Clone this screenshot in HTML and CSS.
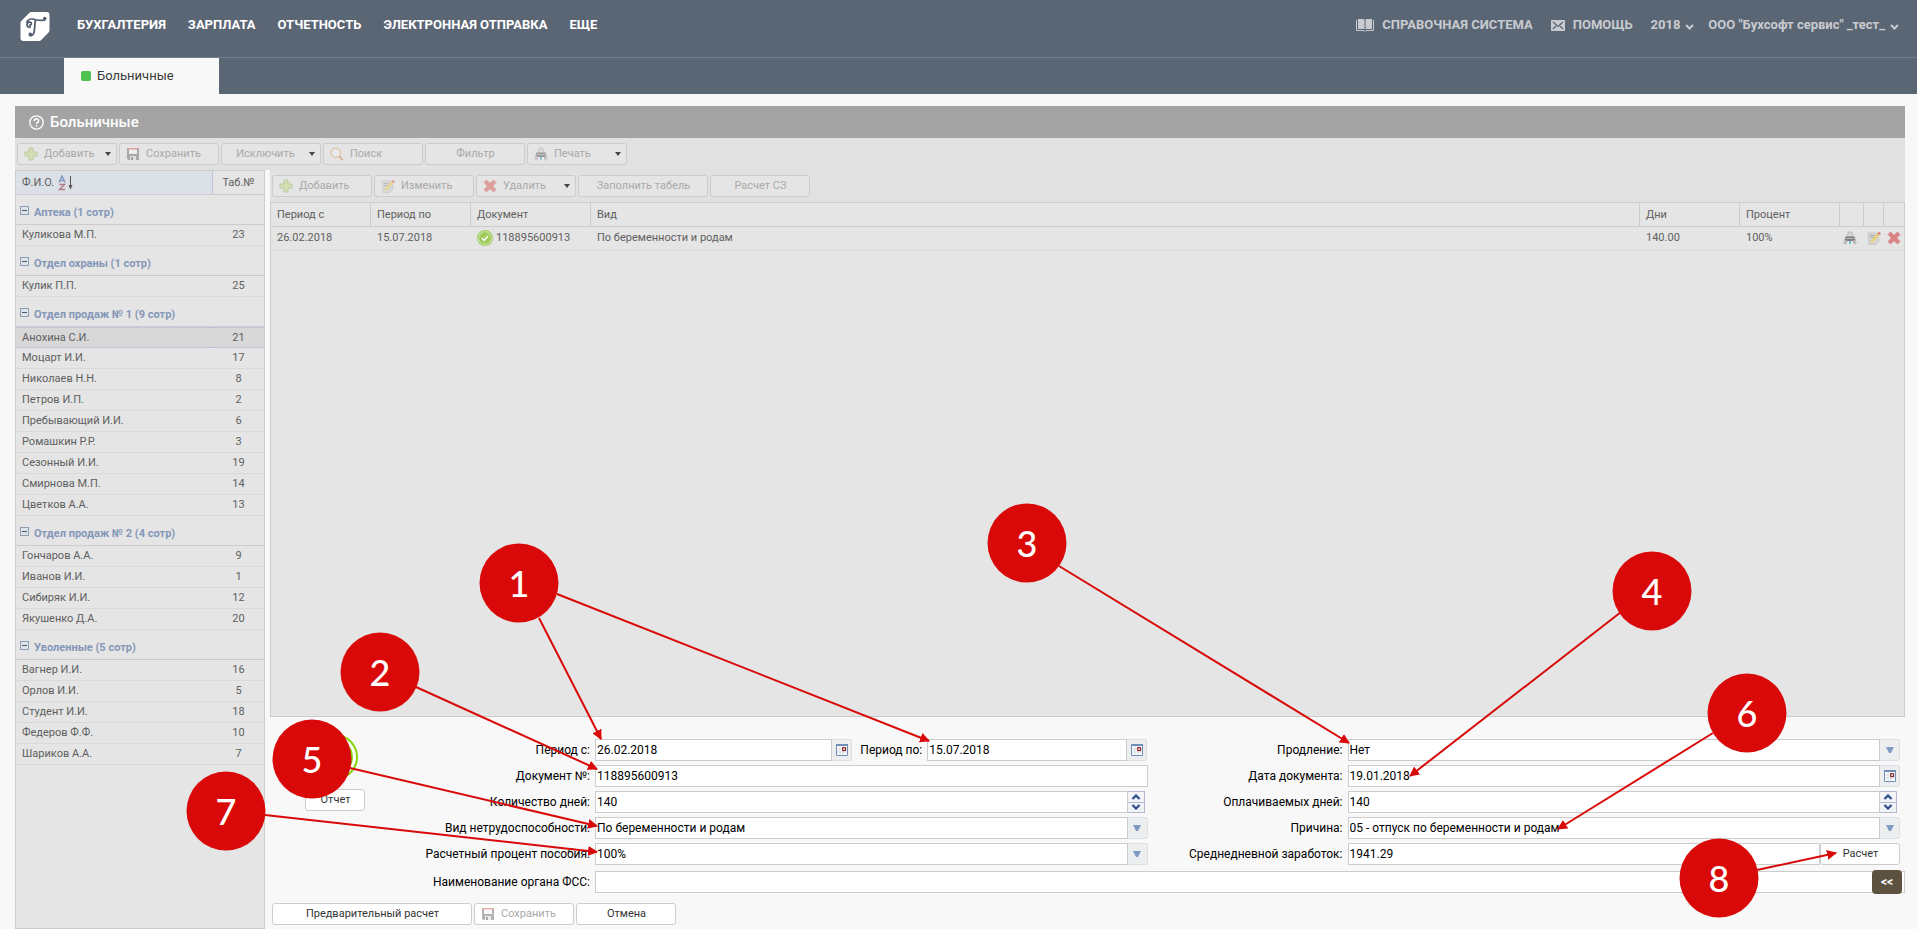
FILE: index.html
```html
<!DOCTYPE html>
<html lang="ru">
<head>
<meta charset="utf-8">
<title>Больничные</title>
<link rel="stylesheet" href="styles.css">
</head>
<body>
<svg class="sprite" aria-hidden="true">
  <symbol id="i-plus" viewBox="0 0 14 14"><path d="M5 1h4v4h4v4H9v4H5V9H1V5h4z" fill="#c5da8e" stroke="#9fb86c"/></symbol>
  <symbol id="i-save" viewBox="0 0 14 14"><path d="M1 1h12v12H2.500L1 11.500z" fill="#777"/><path d="M3 1h8v6H3z" fill="#f4f4f4"/><path d="M2 1h10v1.500H2z" fill="#e06a60"/><path d="M4 9h6v4H4z" fill="#ddd"/><path d="M5 10h2v3H5z" fill="#666"/></symbol>
  <symbol id="i-search" viewBox="0 0 16 16"><circle cx="6.500" cy="6.500" r="5.300" fill="#e9eef2" stroke="#dba76b" stroke-width="1.500"/><path d="M10.500 10.500l4 4.500" stroke="#c98a4e" stroke-width="2.200"/></symbol>
  <symbol id="i-print" viewBox="0 0 14 14"><path d="M4 6l1-4.500q2-1.500 4 0L10 6z" fill="#d2d2d2" stroke="#999" stroke-width=".7"/><path d="M2.500 5.500h9L13.500 12H.500z" fill="#5e5e5e"/><path d="M2.500 7.500h9" stroke="#aaa"/><path d="M.500 12l1-3h2v4.500h-2zM13.500 12l-1-3h-2v4.500h2z" fill="#b5b5b5"/><path d="M4 10h6v3.500H4z" fill="#eee"/><path d="M6 10h2v3H6z" fill="#4cb0c8"/></symbol>
  <symbol id="i-edit" viewBox="0 0 14 14"><path d="M1 2h10l1 8-3 3.500H2z" fill="#d0d0cb" stroke="#b0b0b0" stroke-width=".7"/><path d="M3 4.500h5M3 6.500h4" stroke="#999"/><path d="M4 9.500l6.500-7 2 1.800-6.500 6.500-2.500.700z" fill="#eccb4b"/><path d="M10.500 2.500l1.500-1.700 2 1.800-1.500 1.700z" fill="#dc5c58"/></symbol>
  <symbol id="i-del" viewBox="0 0 14 14"><path d="M3.500 1L7 4.300 10.500 1 13 3.500 9.700 7l3.300 3.500-2.500 2.500L7 9.700 3.500 13 1 10.500 4.300 7 1 3.500z" fill="#d76464" stroke="#d76464" stroke-width=".8"/></symbol>
  <symbol id="i-caret" viewBox="0 0 6 4"><path d="M0 0h6L3 4z" fill="currentColor"/></symbol>
  <symbol id="i-drop" viewBox="0 0 8 6"><path d="M0 0h8L5 6H3z" fill="#7f9bc4"/></symbol>
  <symbol id="i-up" viewBox="0 0 10 6"><path d="M1.500 5l3.500-3.500L8.500 5" fill="none" stroke="#2b4c8c" stroke-width="2.200"/></symbol>
  <symbol id="i-down" viewBox="0 0 10 6"><path d="M1.500 1L5 4.500 8.500 1" fill="none" stroke="#2b4c8c" stroke-width="2.200"/></symbol>
  <symbol id="i-cal" viewBox="0 0 12 12"><path d="M.5 .5h11v11H.5z" fill="#fff" stroke="#6f8eb9"/><path d="M0 0h12v2H0z" fill="#6f8eb9"/><path d="M1 5h10M1 8h10M4 2v9M7 2v9" stroke="#d5d9df"/><rect x="6.700" y="3.700" width="2.800" height="2.800" fill="#fff" stroke="#8a2b2b" stroke-width="1.200"/></symbol>
  <symbol id="i-minus" viewBox="0 0 9 9"><rect x=".5" y=".5" width="8" height="8" fill="#dde3ea" stroke="#8d9db3"/><path d="M2 4.500h5" stroke="#556"/></symbol>
  <symbol id="i-chev" viewBox="0 0 9 6"><path d="M1 1l3.500 3.500L8 1" fill="none" stroke="#c8cbd0" stroke-width="2"/></symbol>
</svg>

<header class="top">
  <div class="bar">
    <svg class="logo" viewBox="0 0 30 30" role="img" aria-label="Бухсофт"><path d="M11.500 0H27a3 3 0 0 1 3 3v15.500q0 1.500-1 2.600l-7.500 7.800q-1 1.100-2.500 1.100H3a3 3 0 0 1-3-3V11.500Q0 10 1 9L9 1q1-1 2.500-1z" fill="#fff"/><path d="M9.500 13.500c2 .5 2.500-2.500.5-3-2.500-.5-4 2-3 4 .8 1.500 2.500 1.500 3 1M6.500 10.500c2-4.500 6-3.500 9.500-2.500 4 1 10 1.300 10-1.200 0-1.500-2.200-1.200-1.700.2M15.500 8.500c-1 4-.5 8-1.500 12.500-.8 3.500-4.300 4.500-4.800 2.500-.2-1.700 1.600-2 1.800-.6" fill="none" stroke="#4f5d6e" stroke-width="1.800" stroke-linecap="round"/></svg>
    <nav class="menu">
      <a href="#">БУХГАЛТЕРИЯ</a><a href="#">ЗАРПЛАТА</a><a href="#">ОТЧЕТНОСТЬ</a><a href="#">ЭЛЕКТРОННАЯ ОТПРАВКА</a><a href="#">ЕЩЕ</a>
    </nav>
    <nav class="side">
      <a href="#"><svg width="18" height="13" viewBox="0 0 18 13"><path d="M2 0h5.500q1 0 1 1v9H2zM16 0h-5.500q-1 0-1 1v9H16z" fill="#c8cbd0"/><path d="M.5 1v10.500H8l1 1 1-1h7.500V1" fill="none" stroke="#c8cbd0"/></svg>СПРАВОЧНАЯ СИСТЕМА</a>
      <a href="#"><svg width="14" height="11" viewBox="0 0 14 11"><rect width="14" height="11" rx="1" fill="#c8cbd0"/><path d="M2 2l5 4.500L12 2M2 9l3-3M12 9L9 6" fill="none" stroke="#5b6675" stroke-width="1.200"/></svg>ПОМОЩЬ</a>
      <span class="picks">
        <a href="#" class="pick">2018<svg width="9" height="6"><use href="#i-chev"/></svg></a>
        <a href="#" class="pick">ООО "Бухсофт сервис" _тест_<svg width="9" height="6"><use href="#i-chev"/></svg></a>
      </span>
    </nav>
  </div>
  <div class="tabs"><a class="tab" href="#"><span class="dot"></span>Больничные</a></div>
</header>

<main class="work">
  <h1 class="title"><svg width="15" height="15" viewBox="0 0 15 15"><circle cx="7.500" cy="7.500" r="6.700" fill="none" stroke="#fff" stroke-width="1.300"/><path d="M5.300 6c0-3 4.400-3 4.400-.2 0 1.500-2.200 1.500-2.200 3.200M7.500 10.300v1.500" fill="none" stroke="#fff" stroke-width="1.500"/></svg>Больничные</h1>

  <div class="tools">
    <button class="btn" disabled><svg class="ico"><use href="#i-plus"/></svg><span>Добавить</span><svg class="caret"><use href="#i-caret"/></svg></button>
    <button class="btn" disabled><svg class="ico"><use href="#i-save"/></svg><span>Сохранить</span></button>
    <button class="btn plain" disabled><span>Исключить</span><svg class="caret"><use href="#i-caret"/></svg></button>
    <button class="btn" disabled><svg class="ico"><use href="#i-search"/></svg><span>Поиск</span></button>
    <button class="btn plain" disabled><span>Фильтр</span></button>
    <button class="btn" disabled><svg class="ico"><use href="#i-print"/></svg><span>Печать</span><svg class="caret"><use href="#i-caret"/></svg></button>
  </div>

  <div class="split">
    <section class="staff">
      <table>
        <thead><tr><th class="sorted">Ф.И.О. <svg width="20" height="16" viewBox="0 0 20 16"><path d="M1 7.500L4 1l3 6.500M2 5.500h4" fill="none" stroke="#8599c4" stroke-width="1.500"/><path d="M1.500 9.500h5l-5 5h5.500" fill="none" stroke="#b57f88" stroke-width="1.500"/><path d="M12.500 1v10" stroke="#555"/><path d="M10.500 10h4l-2 4.500z" fill="#555"/></svg></th><th class="num">Таб.№</th></tr></thead>
        <tbody>
          <tr class="group"><th colspan="2"><svg width="9" height="9"><use href="#i-minus"/></svg>Аптека (1 сотр)</th></tr>
          <tr><td>Куликова М.П.</td><td class="num">23</td></tr>
          <tr class="group"><th colspan="2"><svg width="9" height="9"><use href="#i-minus"/></svg>Отдел охраны (1 сотр)</th></tr>
          <tr><td>Кулик П.П.</td><td class="num">25</td></tr>
          <tr class="group"><th colspan="2"><svg width="9" height="9"><use href="#i-minus"/></svg>Отдел продаж № 1 (9 сотр)</th></tr>
          <tr class="current"><td>Анохина С.И.</td><td class="num">21</td></tr>
          <tr><td>Моцарт И.И.</td><td class="num">17</td></tr>
          <tr><td>Николаев Н.Н.</td><td class="num">8</td></tr>
          <tr><td>Петров И.П.</td><td class="num">2</td></tr>
          <tr><td>Пребывающий И.И.</td><td class="num">6</td></tr>
          <tr><td>Ромашкин Р.Р.</td><td class="num">3</td></tr>
          <tr><td>Сезонный И.И.</td><td class="num">19</td></tr>
          <tr><td>Смирнова М.П.</td><td class="num">14</td></tr>
          <tr><td>Цветков А.А.</td><td class="num">13</td></tr>
          <tr class="group"><th colspan="2"><svg width="9" height="9"><use href="#i-minus"/></svg>Отдел продаж № 2 (4 сотр)</th></tr>
          <tr><td>Гончаров А.А.</td><td class="num">9</td></tr>
          <tr><td>Иванов И.И.</td><td class="num">1</td></tr>
          <tr><td>Сибиряк И.И.</td><td class="num">12</td></tr>
          <tr><td>Якушенко Д.А.</td><td class="num">20</td></tr>
          <tr class="group"><th colspan="2"><svg width="9" height="9"><use href="#i-minus"/></svg>Уволенные (5 сотр)</th></tr>
          <tr><td>Вагнер И.И.</td><td class="num">16</td></tr>
          <tr><td>Орлов И.И.</td><td class="num">5</td></tr>
          <tr><td>Студент И.И.</td><td class="num">18</td></tr>
          <tr><td>Федеров Ф.Ф.</td><td class="num">10</td></tr>
          <tr><td>Шариков А.А.</td><td class="num">7</td></tr>
        </tbody>
      </table>
    </section>

    <section class="detail">
      <div class="tools">
        <button class="btn" disabled><svg class="ico"><use href="#i-plus"/></svg><span>Добавить</span></button>
        <button class="btn" disabled><svg class="ico"><use href="#i-edit"/></svg><span>Изменить</span></button>
        <button class="btn" disabled><svg class="ico"><use href="#i-del"/></svg><span>Удалить</span><svg class="caret"><use href="#i-caret"/></svg></button>
        <button class="btn plain wide" disabled><span>Заполнить табель</span></button>
        <button class="btn plain" disabled><span>Расчет СЗ</span></button>
      </div>
      <div class="sheet">
        <table>
          <colgroup><col class="c-date"><col class="c-date"><col class="c-doc"><col><col class="c-date"><col class="c-date"><col class="c-act"><col class="c-act2"><col class="c-act2"></colgroup>
          <thead><tr><th>Период с</th><th>Период по</th><th>Документ</th><th>Вид</th><th>Дни</th><th>Процент</th><th></th><th></th><th></th></tr></thead>
          <tbody><tr><td>26.02.2018</td><td>15.07.2018</td>
            <td class="doc"><svg width="16" height="16" viewBox="0 0 16 16"><circle cx="8" cy="8" r="7.400" fill="#dcebc0" stroke="#a3cf62" stroke-width="1.200"/><circle cx="8" cy="8" r="6" fill="#a0cc5c"/><path d="M5 8.200l2.200 2.200L11 6" fill="none" stroke="#fff" stroke-width="1.500"/></svg>118895600913</td>
            <td>По беременности и родам</td><td>140.00</td><td>100%</td>
            <td class="act"><svg width="14" height="14"><use href="#i-print"/></svg></td><td class="act"><svg width="14" height="14"><use href="#i-edit"/></svg></td><td class="act"><svg width="14" height="14"><use href="#i-del"/></svg></td></tr></tbody>
        </table>
      </div>

      <form class="form">
        <div class="state">
          <svg width="48" height="48" viewBox="0 0 48 48"><circle cx="24" cy="24" r="22" fill="#fff" stroke="#86d60a" stroke-width="2"/><circle cx="24" cy="24" r="18" fill="#86d60a"/></svg>
          <button type="button" class="btn plain small"><span>Отчет</span></button>
        </div>
        <div class="fields">
          <label for="from">Период с:</label>
          <div class="pair">
            <div class="ctl"><input id="from" value="26.02.2018"><button type="button" class="trig" aria-label="Календарь"><svg width="12" height="12"><use href="#i-cal"/></svg></button></div>
            <label for="to">Период по:</label>
            <div class="ctl"><input id="to" value="15.07.2018"><button type="button" class="trig" aria-label="Календарь"><svg width="12" height="12"><use href="#i-cal"/></svg></button></div>
          </div>
          <label for="ext">Продление:</label>
          <div class="ctl"><select id="ext"><option>Нет</option></select><span class="trig"><svg width="8" height="6"><use href="#i-drop"/></svg></span></div>

          <label for="doc">Документ №:</label>
          <div class="ctl"><input id="doc" value="118895600913"></div>
          <label for="ddate">Дата документа:</label>
          <div class="ctl"><input id="ddate" value="19.01.2018"><button type="button" class="trig" aria-label="Календарь"><svg width="12" height="12"><use href="#i-cal"/></svg></button></div>

          <label for="days">Количество дней:</label>
          <div class="ctl"><input id="days" value="140"><span class="spin"><button type="button" aria-label="Больше"><svg width="10" height="6"><use href="#i-up"/></svg></button><button type="button" aria-label="Меньше"><svg width="10" height="6"><use href="#i-down"/></svg></button></span></div>
          <label for="paid">Оплачиваемых дней:</label>
          <div class="ctl"><input id="paid" value="140"><span class="spin"><button type="button" aria-label="Больше"><svg width="10" height="6"><use href="#i-up"/></svg></button><button type="button" aria-label="Меньше"><svg width="10" height="6"><use href="#i-down"/></svg></button></span></div>

          <label for="kind">Вид нетрудоспособности:</label>
          <div class="ctl"><select id="kind"><option>По беременности и родам</option></select><span class="trig"><svg width="8" height="6"><use href="#i-drop"/></svg></span></div>
          <label for="why">Причина:</label>
          <div class="ctl"><select id="why"><option>05 - отпуск по беременности и родам</option></select><span class="trig"><svg width="8" height="6"><use href="#i-drop"/></svg></span></div>

          <label for="pct">Расчетный процент пособия:</label>
          <div class="ctl"><select id="pct"><option>100%</option></select><span class="trig"><svg width="8" height="6"><use href="#i-drop"/></svg></span></div>
          <label for="avg">Среднедневной заработок:</label>
          <div class="ctl"><input id="avg" value="1941.29"><button type="button" class="btn plain calc"><span>Расчет</span></button></div>
        </div>
        <div class="org"><label for="fss">Наименование органа ФСС:</label><input id="fss"><button type="button" class="fold">&lt;&lt;</button></div>
        <div class="actions">
          <button type="button" class="btn plain big"><span>Предварительный расчет</span></button>
          <button type="button" class="btn" disabled><svg class="ico"><use href="#i-save"/></svg><span>Сохранить</span></button>
          <button type="button" class="btn plain"><span>Отмена</span></button>
        </div>
      </form>
    </section>
  </div>
</main>

<svg class="notes" width="1917" height="935" viewBox="0 0 1917 935">
  <defs><marker id="tip" viewBox="0 0 10 10" refX="9" refY="5" markerWidth="10" markerHeight="10" markerUnits="userSpaceOnUse" orient="auto"><path d="M0 0l10 5-10 5z" fill="#d90909"/></marker></defs>
  <g stroke="#d90909" stroke-width="2">
    <path marker-end="url(#tip)" d="M539 618L601 739"/><path marker-end="url(#tip)" d="M557 594L929 741"/><path marker-end="url(#tip)" d="M416 687L597 769"/><path marker-end="url(#tip)" d="M1059 566L1349 743"/><path marker-end="url(#tip)" d="M1621 612L1410 776"/><path marker-end="url(#tip)" d="M350 768L597 826"/><path marker-end="url(#tip)" d="M1713 733L1558 829"/><path marker-end="url(#tip)" d="M265 815L597 852"/><path marker-end="url(#tip)" d="M1757 870L1836 853"/>
  </g>
  <g fill="#d90909"><circle cx="519" cy="583" r="39.500"/><circle cx="380" cy="672" r="39.500"/><circle cx="1027" cy="543" r="39.500"/><circle cx="1652" cy="591" r="39.500"/><circle cx="312" cy="759" r="39.500"/><circle cx="1747" cy="713" r="39.500"/><circle cx="226" cy="811" r="39.500"/><circle cx="1719" cy="878" r="39.500"/></g>
  <g class="digits"><text x="519" y="597">1</text><text x="380" y="686">2</text><text x="1027" y="557">3</text><text x="1652" y="605">4</text><text x="312" y="773">5</text><text x="1747" y="727">6</text><text x="226" y="825">7</text><text x="1719" y="892">8</text></g>
</svg>
</body>
</html>
```
FILE: styles.css
```css
* { box-sizing: border-box; }
body {
  margin: 0;
  min-height: 100vh;
  padding-bottom: 6px;
  display: flex;
  flex-direction: column;
  position: relative;
  background: #fff;
  font: 11px/14px Roboto, "Liberation Sans", sans-serif;
  color: #000;
}
a { color: inherit; text-decoration: none; }
svg { flex: none; }
button, input, select { font: inherit; color: inherit; margin: 0; }
table { width: 100%; border-spacing: 0; table-layout: fixed; }
th { font-weight: 400; text-align: left; }
.sprite { position: absolute; width: 0; height: 0; }

.top { background: #5b6675; }
.bar {
  display: flex;
  align-items: flex-start;
  height: 58px;
  padding: 12px 18px 0 20px;
  border-bottom: 1px solid #727e8f;
}
.logo { width: 30px; height: 29px; }
.menu, .side { display: flex; font: 700 13px/26px Roboto, sans-serif; }
.menu { gap: 22px; margin-left: 27px; color: #fff; }
.side { gap: 18px; margin-left: auto; color: #c8cbd0; }
.side a { display: flex; align-items: center; gap: 8px; }
.picks { display: flex; gap: 14px; }
.side .pick { gap: 5px; }
.side .pick svg { margin-top: 4px; }
.tabs { height: 36px; padding-left: 64px; }
.tab {
  display: flex;
  align-items: center;
  gap: 6px;
  width: 155px;
  height: 36px;
  padding-left: 17px;
  background: #f8f8f8;
  color: #3a3a3a;
  font-size: 13px;
}
.dot { width: 10px; height: 10px; border-radius: 2px; background: #4fc34f; }

.work {
  flex: 1;
  display: flex;
  flex-direction: column;
  padding: 12px 12px 0 15px;
  background: #f8f8f8;
}
.title {
  display: flex;
  align-items: center;
  gap: 6px;
  height: 32px;
  margin: 0;
  padding-left: 14px;
  background: #a4a4a4;
  color: #fff;
  font-size: 15px;
  font-weight: 500;
}
.tools {
  display: flex;
  gap: 2px;
  height: 32px;
  padding: 5px 2px;
  background: #e1e1e1;
}
.btn {
  display: flex;
  align-items: center;
  gap: 6px;
  width: 100px;
  height: 22px;
  padding: 0 5px 0 6px;
  border: 1px solid #ccc;
  border-radius: 3px;
  background: #fff;
  color: #333;
}
.btn:disabled { color: #a9a9a9; }
.tools .btn { background: #e5e5e5; }
.btn .ico { width: 14px; height: 14px; opacity: .55; }
.btn .caret { width: 6px; height: 4px; margin-left: auto; color: #444; }
.plain span { flex: 1; text-align: center; }
.wide { width: 130px; }
.big { width: 200px; }
.small { width: 60px; }

.split { flex: 1; display: flex; gap: 5px; }
.staff {
  width: 250px;
  border: 1px solid #ccc;
  background: #e5e5e5;
  color: #606060;
}
.staff th, .staff td { height: 21px; padding: 0 6px; border-bottom: 1px solid #dadada; }
.staff .num { width: 51px; text-align: center; }
.staff thead th { height: 24px; border-color: #ccc; }
.staff .sorted { background: #dce1e7; border-right: 1px solid #b9c6d8; }
.staff thead svg { vertical-align: middle; margin-left: 1px; }
.staff .group th {
  height: 30px;
  padding: 6px 4px 0;
  border-color: #ccc;
  color: #8497b8;
  font-weight: 700;
}
.group svg { margin-right: 5px; vertical-align: 1px; }
.staff .current td { background: #d8d8d8; border-top: 1px dotted #aab6d3; border-bottom: 1px dotted #aab6d3; }

.detail { flex: 1; min-width: 0; display: flex; flex-direction: column; }
.sheet { flex: 1; border: 1px solid #ccc; background: #e5e5e5; color: #606060; }
.sheet th, .sheet td { height: 24px; padding: 0 0 0 6px; border-bottom: 1px solid #dadada; }
.sheet td { padding-bottom: 2px; }
.sheet th { border-color: #ccc; border-right: 1px solid #ccc; }
.sheet th:last-child { border-right: 0; }
.sheet .doc svg { vertical-align: middle; margin-right: 3px; }
.sheet .act { padding-left: 3px; }
.act svg { display: block; opacity: .75; }
.c-date { width: 100px; }
.c-doc { width: 120px; }
.c-act { width: 24px; }
.c-act2 { width: 20px; }

.form { display: grid; grid-template-columns: 130px 1fr; padding: 22px 0 4px; font-size: 12px; }
.state { display: flex; flex-direction: column; align-items: center; gap: 8px; margin-top: -6px; }
.form .btn { font-size: 11px; }
.fields {
  display: grid;
  grid-template-columns: 190px minmax(0, 1fr) 190px minmax(0, 1fr);
  grid-auto-rows: 22px;
  gap: 4px 5px;
  align-items: center;
  padding-right: 5px;
}
.fields > label, .org label { text-align: right; }
.ctl { display: flex; }
.pair { display: grid; grid-template-columns: 257fr 65px 220fr; gap: 5px; align-items: center; }
.pair label { text-align: right; }
.form input, .form select {
  flex: 1;
  min-width: 0;
  height: 22px;
  padding: 0 1px;
  border: 1px solid #ccc;
  border-radius: 0;
  background: #fff;
  appearance: none;
}
.trig {
  display: flex;
  align-items: center;
  justify-content: center;
  width: 20px;
  height: 22px;
  padding: 0;
  border: 1px solid #dcdfe3;
  border-left: 0;
  border-radius: 0 3px 3px 0;
  background: #eceef0;
}
.spin { display: flex; flex-direction: column; width: 17px; height: 22px; margin-right: 3px; border: 1px solid #b4b9d0; border-left: 0; }
.spin button { display: flex; align-items: center; justify-content: center; flex: 1; padding: 0; border: 0; background: #f1f2f5; }
.spin button + button { border-top: 1px solid #b4b9d0; }
.form .calc { width: 80px; }
.org { grid-column: 1 / -1; position: relative; display: flex; align-items: center; gap: 5px; margin-top: 6px; }
.org label { width: 320px; }
.fold {
  position: absolute;
  right: 3px;
  top: -1px;
  width: 30px;
  height: 24px;
  padding: 0;
  border: 0;
  border-radius: 4px;
  background: #5d5140;
  color: #fff;
  font-weight: 700;
}
.actions { grid-column: 1 / -1; display: flex; gap: 2px; margin-top: 10px; padding-left: 2px; }

.notes { position: absolute; left: 0; top: 0; pointer-events: none; }
.digits { fill: #fff; font: 500 36px Lato, sans-serif; text-anchor: middle; }
```
